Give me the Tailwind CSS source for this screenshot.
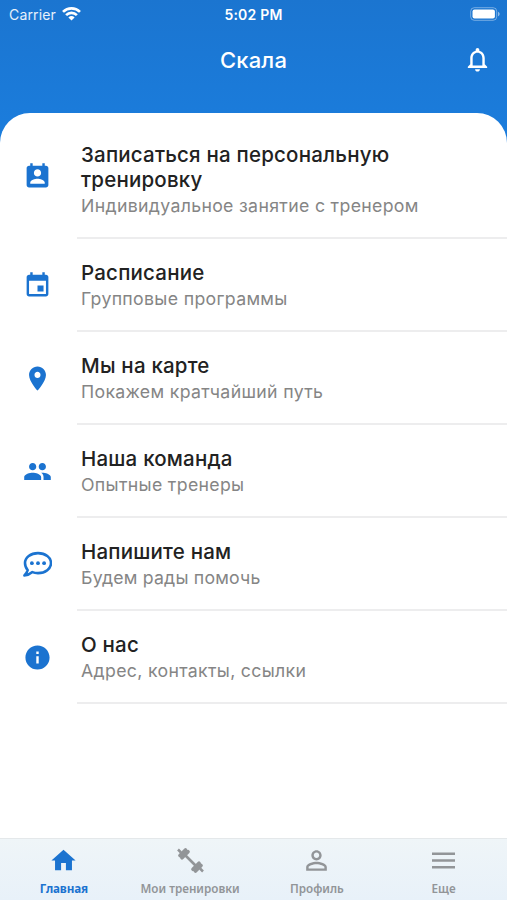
<!DOCTYPE html>
<html lang="ru">
<head>
    <meta charset="UTF-8">
    <meta name="viewport" content="width=device-width, initial-scale=1.0">
    <title>Скала</title>
    <script src="https://cdn.jsdelivr.net/npm/@tailwindcss/browser@4"></script>
</head>
<body class="bg-white font-['Inter',sans-serif]">
    <div class="flex flex-col h-[900px] overflow-hidden bg-linear-to-b from-[#1b75d0] to-[#1b7ddd] to-[140px]">
        <!-- Status bar -->
        <div class="grid grid-cols-3 items-center h-7 pl-[9px] pr-[7px] text-white shrink-0">
            <div class="flex items-center gap-[6px]">
                <span class="text-[14px] tracking-[0.15px] text-white/90">Carrier</span>
                <svg class="w-[19px] h-[14px]" viewBox="0 0 19 14" fill="none" stroke="currentColor" stroke-width="2.7">
                    <path d="M1 4.900a12.200 12.200 0 0 1 17 0"/>
                    <path d="M4.100 8.100a7.800 7.800 0 0 1 10.800 0"/>
                    <path d="M9.500 13.600 6.400 10.500a4.500 4.500 0 0 1 6.200 0z" fill="currentColor" stroke="none"/>
                </svg>
            </div>
            <span class="text-center text-[14px] font-semibold tracking-[0.2px] -ml-[2px]">5:02 PM</span>
            <svg class="justify-self-end w-[30px] h-[14px]" viewBox="0 0 30 14">
                <rect x=".7" y=".7" width="26" height="12.6" rx="3.6" fill="none" stroke="#fff" stroke-opacity=".4"/>
                <rect x="2.5" y="2.500" width="22.400" height="9" rx="2" fill="#fff"/>
                <path d="M28 4.700c2.200.9 2.200 3.700 0 4.600z" fill="#fff" fill-opacity=".5"/>
            </svg>
        </div>

        <!-- Header -->
        <header class="grid grid-cols-[1fr_auto_1fr] items-center h-[64px] mb-[21px] px-[15px] text-white shrink-0">
            <h1 class="col-start-2 text-[22px] font-medium tracking-[0.2px]">Скала</h1>
            <svg class="justify-self-end w-[29px] h-[29px] -mt-[2px]" viewBox="0 0 24 24" fill="currentColor">
                <path d="M12 22c1.1 0 2-.9 2-2h-4c0 1.1.9 2 2 2zm6-6v-5c0-3.07-1.63-5.64-4.5-6.32V4c0-.83-.67-1.5-1.5-1.5s-1.5.67-1.5 1.5v.68C7.64 5.36 6 7.92 6 11v5l-2 2v1h16v-1l-2-2zm-2 1H8v-6c0-2.48 1.51-4.5 4-4.5s4 2.02 4 4.5v6z"/>
            </svg>
        </header>

        <!-- Menu -->
        <main class="flex-1 bg-white rounded-t-[30px]">
            <a class="flex items-center h-[126px] pl-[23px]">
                <svg class="w-[29px] h-[29px] mr-[25px] text-[#1b73d0]" viewBox="0 0 24 24" fill="currentColor">
                    <path d="M19 3h-1V1h-2v2H8V1H6v2H5c-1.11 0-2 .9-2 2v14c0 1.1.89 2 2 2h14c1.1 0 2-.9 2-2V5c0-1.1-.9-2-2-2zm-7 3c1.66 0 3 1.34 3 3s-1.34 3-3 3-3-1.34-3-3 1.34-3 3-3zm6 12H6v-1c0-2 4-3.1 6-3.1s6 1.1 6 3.1v1z"/>
                </svg>
                <div class="flex flex-col justify-center flex-1 h-full pl-1 pt-[12px] border-b-2 border-[#ededee]">
                    <p class="text-[20.5px] leading-[25px] font-medium tracking-[0.2px] text-[#222]">Записаться на персональную<br>тренировку</p>
                    <p class="text-[17.7px] leading-7 tracking-[0.33px] text-[#858585]">Индивидуальное занятие с тренером</p>
                </div>
            </a>
            <a class="flex items-center h-[93px] pl-[23px]">
                <svg class="w-[29px] h-[29px] mr-[25px] text-[#1b73d0]" viewBox="0 0 24 24" fill="currentColor">
                    <path d="M17 12h-5v5h5v-5zM16 1v2H8V1H6v2H5c-1.11 0-1.99.9-1.99 2L3 19c0 1.1.89 2 2 2h14c1.1 0 2-.9 2-2V5c0-1.1-.9-2-2-2h-1V1h-2zm3 18H5V8h14v11z"/>
                </svg>
                <div class="flex flex-col justify-center flex-1 h-full pl-1 pt-[4px] border-b-2 border-[#ededee]">
                    <p class="text-[20.5px] leading-[25px] font-medium tracking-[0.2px] text-[#222]">Расписание</p>
                    <p class="text-[17.7px] leading-7 tracking-[0.33px] text-[#858585]">Групповые программы</p>
                </div>
            </a>
            <a class="flex items-center h-[93px] pl-[23px]">
                <svg class="w-[29px] h-[29px] mr-[25px] text-[#1b73d0]" viewBox="0 0 24 24" fill="currentColor">
                    <path d="M12 2C8.13 2 5 5.13 5 9c0 5.25 7 13 7 13s7-7.75 7-13c0-3.87-3.13-7-7-7zm0 9.5c-1.38 0-2.5-1.12-2.5-2.5s1.12-2.5 2.5-2.5 2.5 1.12 2.5 2.5-1.12 2.5-2.5 2.5z"/>
                </svg>
                <div class="flex flex-col justify-center flex-1 h-full pl-1 pt-[4px] border-b-2 border-[#ededee]">
                    <p class="text-[20.5px] leading-[25px] font-medium tracking-[0.2px] text-[#222]">Мы на карте</p>
                    <p class="text-[17.7px] leading-7 tracking-[0.33px] text-[#858585]">Покажем кратчайший путь</p>
                </div>
            </a>
            <a class="flex items-center h-[93px] pl-[23px]">
                <svg class="w-[29px] h-[29px] mr-[25px] text-[#1b73d0]" viewBox="0 0 24 24" fill="currentColor">
                    <path d="M16 11c1.66 0 2.99-1.34 2.99-3S17.66 5 16 5c-1.66 0-3 1.34-3 3s1.34 3 3 3zm-8 0c1.66 0 2.99-1.34 2.99-3S9.66 5 8 5C6.34 5 5 6.34 5 8s1.34 3 3 3zm0 2c-2.33 0-7 1.17-7 3.5V19h14v-2.5c0-2.33-4.67-3.5-7-3.5zm8 0c-.29 0-.62.02-.97.05 1.16.84 1.97 1.97 1.97 3.45V19h6v-2.5c0-2.33-4.67-3.5-7-3.5z"/>
                </svg>
                <div class="flex flex-col justify-center flex-1 h-full pl-1 pt-[4px] border-b-2 border-[#ededee]">
                    <p class="text-[20.5px] leading-[25px] font-medium tracking-[0.2px] text-[#222]">Наша команда</p>
                    <p class="text-[17.7px] leading-7 tracking-[0.33px] text-[#858585]">Опытные тренеры</p>
                </div>
            </a>
            <a class="flex items-center h-[92.5px] pl-[23px]">
                <svg class="w-[29px] h-[29px] mr-[25px] text-[#1b73d0]" viewBox="0 0 29 29" fill="none" stroke="currentColor" stroke-width="2.6" stroke-linejoin="round">
                    <path d="M15 3.100c7.400 0 13 4.400 13 10s-5.600 10-13 10c-2 0-3.900-.3-5.600-1-1.900 1.600-4.600 3.400-8 3.400 1.600-1.500 2.900-3.300 3.300-5.400C2.900 18.200 2 15.700 2 13.100c0-5.600 5.600-10 13-10z"/>
                    <g fill="currentColor" stroke="none">
                        <circle cx="8.900" cy="13.200" r="1.900"/>
                        <circle cx="15" cy="13.200" r="1.900"/>
                        <circle cx="21.100" cy="13.200" r="1.900"/>
                    </g>
                </svg>
                <div class="flex flex-col justify-center flex-1 h-full pl-1 pt-[4px] border-b-2 border-[#ededee]">
                    <p class="text-[20.5px] leading-[25px] font-medium tracking-[0.2px] text-[#222]">Напишите нам</p>
                    <p class="text-[17.7px] leading-7 tracking-[0.2px] text-[#858585]">Будем рады помочь</p>
                </div>
            </a>
            <a class="flex items-center h-[93px] pl-[23px]">
                <svg class="w-[29px] h-[29px] mr-[25px] text-[#1b73d0]" viewBox="0 0 24 24" fill="currentColor">
                    <path d="M12 2C6.480 2 2 6.480 2 12s4.480 10 10 10 10-4.480 10-10S17.520 2 12 2zm1 15h-2v-6h2v6zm0-8h-2V7h2v2z"/>
                </svg>
                <div class="flex flex-col justify-center flex-1 h-full pl-1 pt-[4px] border-b-2 border-[#ededee]">
                    <p class="text-[20.5px] leading-[25px] font-medium tracking-[0.2px] text-[#222]">О нас</p>
                    <p class="text-[17.7px] leading-7 tracking-[0.33px] text-[#858585]">Адрес, контакты, ссылки</p>
                </div>
            </a>
        </main>

        <!-- Tab bar -->
        <nav class="grid grid-cols-4 h-[62px] shrink-0 border-t border-[#e4e8ea] bg-linear-to-b from-[#eff5f8] to-[#e8f1f9] font-['Noto_Sans',sans-serif] text-[11.7px] leading-4 font-semibold text-[#929598]">
            <a class="flex flex-col items-center gap-[5px] pt-[7px] pl-[1px] text-[#1b73d0]">
                <svg class="w-[29px] h-[29px]" viewBox="0 0 24 24" fill="currentColor">
                    <path d="M10 20v-6h4v6h5v-8h3L12 3 2 12h3v8z"/>
                </svg>
                <span class="font-bold tracking-[-0.15px]">Главная</span>
            </a>
            <a class="flex flex-col items-center gap-[5px] pt-[7px]">
                <svg class="w-[29px] h-[29px]" viewBox="0 0 29 29" fill="none" stroke="currentColor">
                    <path d="M7 7 22 22" stroke-width="2.700"/>
                    <path d="M4 9.500 9.500 4M6 11.800 12 5.800M17 23.200 23 17.200M19.500 25 25 19.500" stroke-width="3.700" stroke-linecap="round"/>
                    <path d="M2 3.500 5 6.500M24 22.500 27 25.500" stroke-width="2.500"/>
                </svg>
                <span>Мои тренировки</span>
            </a>
            <a class="flex flex-col items-center gap-[5px] pt-[7px]">
                <svg class="w-[31px] h-[31px] -m-[1px]" viewBox="0 0 24 24" fill="currentColor">
                    <path d="M12 5.900c1.160 0 2.100.94 2.100 2.100s-.94 2.100-2.100 2.100S9.900 9.160 9.900 8s.94-2.100 2.100-2.100m0 9c2.970 0 6.100 1.460 6.100 2.100v1.100H5.900V17c0-.64 3.130-2.100 6.100-2.100M12 4C9.790 4 8 5.790 8 8s1.790 4 4 4 4-1.790 4-4-1.790-4-4-4zm0 9c-2.670 0-8 1.340-8 4v3h16v-3c0-2.660-5.330-4-8-4z"/>
                </svg>
                <span>Профиль</span>
            </a>
            <a class="flex flex-col items-center gap-[5px] pt-[7px]">
                <svg class="w-[29px] h-[29px]" viewBox="0 0 29 29" fill="currentColor">
                    <path d="M3 6.500h23v2.500H3zM3 13.200h23v2.500H3zM3 19.900h23v2.500H3z"/>
                </svg>
                <span>Еще</span>
            </a>
        </nav>
    </div>
</body>
</html>
